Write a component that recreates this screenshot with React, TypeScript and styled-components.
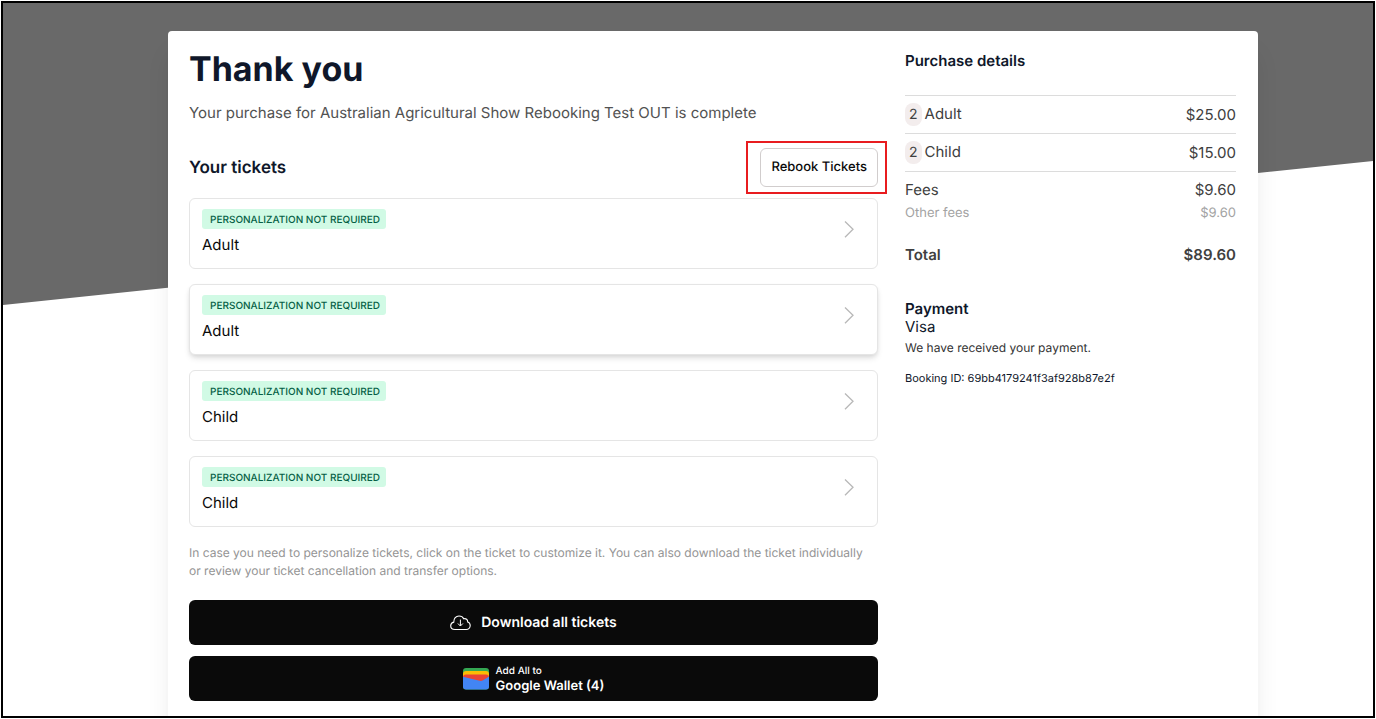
import React from "react";
import styled, { createGlobalStyle } from "styled-components";

const GlobalStyle = createGlobalStyle`
  *, *::before, *::after { box-sizing: border-box; }
  body {
    margin: 0;
    background: #fff;
    font-family: Inter, "Liberation Sans", sans-serif;
    color: #0f172a;
    text-rendering: geometricPrecision;
  }
  h1, h2, h3, p, ul { margin: 0; padding: 0; }
  button { font-family: inherit; text-rendering: inherit; cursor: pointer; }
`;

const Frame = styled.div`
  display: grid;
  grid-template: minmax(0, 1fr) / minmax(0, 1fr);
  height: calc(100vh - 2px);
  margin: 1px;
  border: 2px solid #000;
  overflow: hidden;
`;

const Backdrop = styled.div`
  grid-area: 1 / 1;
  height: 302px;
  background: #696969;
  clip-path: polygon(0 0, 100% 0, 100% 158px, 0 100%);
`;

const Sheet = styled.main`
  grid-area: 1 / 1;
  z-index: 1;
  display: grid;
  grid-template-columns: minmax(0, 689fr) minmax(0, 331fr);
  align-items: start;
  column-gap: 27px;
  min-height: 100%;
  margin: 28px 115px 0 165px;
  padding: 20px 22px 16px 21px;
  border-radius: 4px;
  background: #fff;
  box-shadow: 0 20px 25px -5px rgba(0, 0, 0, 0.1), 0 10px 10px -5px rgba(0, 0, 0, 0.04);
`;

const Column = styled.section`
  display: flex;
  flex-direction: column;
`;

const Title = styled.h1`
  font-size: 34px;
  line-height: 38px;
  font-weight: 700;
`;

const Lead = styled.p`
  margin-top: 12px;
  font-size: 15px;
  line-height: 24px;
  color: #525252;
`;

const TicketsHeader = styled.div`
  display: flex;
  align-items: center;
  justify-content: space-between;
  margin-top: 23px;
`;

const SectionTitle = styled.h2`
  font-size: 17px;
  line-height: 24px;
  font-weight: 600;
`;

const Highlight = styled.div`
  position: relative;

  &::after {
    content: "";
    position: absolute;
    inset: -7px -9px -7px -14px;
    border: 2px solid #e81c1f;
    pointer-events: none;
  }
`;

const OutlineButton = styled.button`
  display: block;
  height: 39px;
  padding: 0 10px 2px;
  border: 1px solid #d1cdcd;
  border-radius: 6px;
  background: #fff;
  color: #0a0a0a;
  font-size: 13px;
  line-height: 20px;
  font-weight: 500;
`;

const TicketList = styled.ul`
  display: grid;
  row-gap: 15px;
  margin-top: 11px;
  list-style: none;
`;

const TicketCard = styled.button<{ $raised?: boolean }>`
  display: flex;
  justify-content: space-between;
  width: 100%;
  height: 71px;
  padding: 10px 20px 12px 12px;
  border: 1px solid #e5e5e5;
  border-radius: 6px;
  background: #fff;
  color: #0a0a0a;
  text-align: left;
  box-shadow: ${(p) =>
    p.$raised
      ? "0 4px 6px -1px rgba(0,0,0,0.12), 0 2px 4px -1px rgba(0,0,0,0.08)"
      : "none"};
`;

const TicketInfo = styled.span`
  display: flex;
  flex-direction: column;
  align-items: flex-start;
  gap: 5px;
`;

const Badge = styled.span`
  padding: 2px 6px 0 8px;
  border-radius: 3px;
  background: #d1fae5;
  color: #065f46;
  font-size: 10px;
  line-height: 18px;
  font-weight: 500;
  text-transform: uppercase;
`;

const TicketName = styled.span`
  font-size: 15px;
  line-height: 22px;
`;

const ChevronIcon = styled.svg`
  margin-top: 11px;
`;

const Hint = styled.p`
  margin-top: 17px;
  padding-right: 4px;
  font-size: 12px;
  line-height: 18px;
  color: #949494;
`;

const Actions = styled.div`
  display: grid;
  row-gap: 11px;
  margin-top: 20px;
`;

const DarkButton = styled.button<{ $gap: number }>`
  display: flex;
  align-items: center;
  justify-content: center;
  gap: ${(p) => p.$gap}px;
  height: 45px;
  padding: 0;
  border: 0;
  border-radius: 6px;
  background: #0a0a0a;
  color: #fff;
  font-size: 14px;
  font-weight: 600;
`;

const WalletText = styled.span`
  display: flex;
  flex-direction: column;
  padding-top: 1px;
  text-align: left;
  font-size: 13px;
  line-height: 15px;
`;

const WalletCaption = styled.span`
  font-size: 10px;
  font-weight: 500;
`;

const DetailsTitle = styled.h2`
  margin-bottom: 24px;
  font-size: 15px;
  line-height: 20px;
  font-weight: 600;
`;

const Summary = styled.table`
  width: 100%;
  border-collapse: collapse;
  color: #404040;
`;

type RowKind = "item" | "fees" | "sub" | "total";

const rowHeights: Record<RowKind, number> = { item: 38, fees: 34, sub: 14, total: 70 };

const SummaryRow = styled.tr<{ $kind: RowKind }>`
  height: ${(p) => rowHeights[p.$kind]}px;
  border-top: ${(p) =>
    p.$kind === "item" || p.$kind === "fees" ? "1px solid #dcdcdc" : "0"};
  color: ${(p) => (p.$kind === "sub" ? "#a3a3a3" : "inherit")};
  font-size: ${(p) => (p.$kind === "sub" ? 13 : 15)}px;
  line-height: ${(p) => (p.$kind === "sub" ? 14 : 20)}px;

  th, td {
    padding: ${(p) => (p.$kind === "fees" ? "2px 0 0" : "0")};
    font-weight: ${(p) => (p.$kind === "total" ? 600 : 400)};
    vertical-align: middle;
  }
  th { text-align: left; }
  td { text-align: right; }
`;

const Quantity = styled.span`
  display: inline-block;
  margin-right: 3px;
  padding: 0 4px;
  border-radius: 8px;
  background: #f3eded;
  font-size: 14px;
  line-height: 23px;
`;

const PaymentTitle = styled.h2`
  margin-top: 10px;
  font-size: 15px;
  line-height: 18px;
  font-weight: 600;
`;

const PaymentMethod = styled.p`
  font-size: 15px;
  line-height: 18px;
`;

const PaymentStatus = styled.p`
  margin-top: 3px;
  font-size: 12px;
  line-height: 18px;
  color: #333;
`;

const BookingId = styled.p`
  margin-top: 12px;
  font-size: 11px;
  line-height: 18px;
`;

const Chevron = () => (
  <ChevronIcon width="16" height="18" viewBox="0 0 16 18" fill="none" aria-hidden="true">
    <path d="M4 1.5 12 9.3 4 17.2" stroke="#b8b8b8" strokeWidth="1.3" />
  </ChevronIcon>
);

const CloudDownload = () => (
  <svg width="21" height="16" viewBox="0 0 21 16" fill="none" stroke="#fff" aria-hidden="true">
    <path
      d="M5 14.5C2.5 14.5.7 13 .7 10.7.7 8.9 1.9 7.600 3.800 7.100 3.600 3.500 6 1 9 1c2.300 0 3.900 1 4.700 2.800 2.300-.6 4.100.8 4 3.200 1.500.5 2.500 1.800 2.500 3.600 0 2.400-1.700 3.900-4 3.900Z"
      strokeWidth="1.1"
    />
    <path d="M10.400 4.600v6.200M7.900 8.500l2.500 2.500 2.500-2.500" strokeWidth="1" />
  </svg>
);

const WalletLogo = () => (
  <svg width="26" height="22" viewBox="0 0 26 22" aria-hidden="true">
    <defs>
      <clipPath id="wallet-shape">
        <rect width="26" height="21.500" rx="3" />
      </clipPath>
    </defs>
    <g clipPath="url(#wallet-shape)">
      <rect width="26" height="22" fill="#34a853" />
      <path d="M0 6a3 3 0 0 1 3-3h20a3 3 0 0 1 3 3v8H0Z" fill="#fbbc04" />
      <path d="M0 9.500a3 3 0 0 1 3-3h20a3 3 0 0 1 3 3v8H0Z" fill="#ea4335" />
      <path d="M0 8.800l16.500 4c1.300.3 2.500.1 3.600-.6L26 8.500V22H0Z" fill="#4285f4" />
    </g>
  </svg>
);

const tickets = [
  { id: 1, name: "Adult" },
  { id: 2, name: "Adult", raised: true },
  { id: 3, name: "Child" },
  { id: 4, name: "Child" },
];

const rows: { kind: RowKind; label: string; amount: string; quantity?: number }[] = [
  { kind: "item", label: "Adult", amount: "$25.00", quantity: 2 },
  { kind: "item", label: "Child", amount: "$15.00", quantity: 2 },
  { kind: "fees", label: "Fees", amount: "$9.60" },
  { kind: "sub", label: "Other fees", amount: "$9.60" },
  { kind: "total", label: "Total", amount: "$89.60" },
];

export default function App() {
  return (
    <>
      <GlobalStyle />
      <Frame>
        <Backdrop />
        <Sheet>
          <Column>
            <Title>Thank you</Title>
            <Lead>Your purchase for Australian Agricultural Show Rebooking Test OUT is complete</Lead>
            <TicketsHeader>
              <SectionTitle>Your tickets</SectionTitle>
              <Highlight>
                <OutlineButton type="button">Rebook Tickets</OutlineButton>
              </Highlight>
            </TicketsHeader>
            <TicketList>
              {tickets.map((t) => (
                <li key={t.id}>
                  <TicketCard type="button" $raised={t.raised}>
                    <TicketInfo>
                      <Badge>Personalization not required</Badge>
                      <TicketName>{t.name}</TicketName>
                    </TicketInfo>
                    <Chevron />
                  </TicketCard>
                </li>
              ))}
            </TicketList>
            <Hint>
              In case you need to personalize tickets, click on the ticket to customize it. You can
              also download the ticket individually or review your ticket cancellation and transfer
              options.
            </Hint>
            <Actions>
              <DarkButton type="button" $gap={10}>
                <CloudDownload />
                Download all tickets
              </DarkButton>
              <DarkButton type="button" $gap={7}>
                <WalletLogo />
                <WalletText>
                  <WalletCaption>Add All to</WalletCaption>
                  Google Wallet (4)
                </WalletText>
              </DarkButton>
            </Actions>
          </Column>
          <Column>
            <DetailsTitle>Purchase details</DetailsTitle>
            <Summary>
              <tbody>
                {rows.map((r) => (
                  <SummaryRow key={r.label} $kind={r.kind}>
                    <th scope="row">
                      {r.quantity && <Quantity>{r.quantity}</Quantity>}
                      {r.label}
                    </th>
                    <td>{r.amount}</td>
                  </SummaryRow>
                ))}
              </tbody>
            </Summary>
            <PaymentTitle>Payment</PaymentTitle>
            <PaymentMethod>Visa</PaymentMethod>
            <PaymentStatus>We have received your payment.</PaymentStatus>
            <BookingId>Booking ID: 69bb4179241f3af928b87e2f</BookingId>
          </Column>
        </Sheet>
      </Frame>
    </>
  );
}
